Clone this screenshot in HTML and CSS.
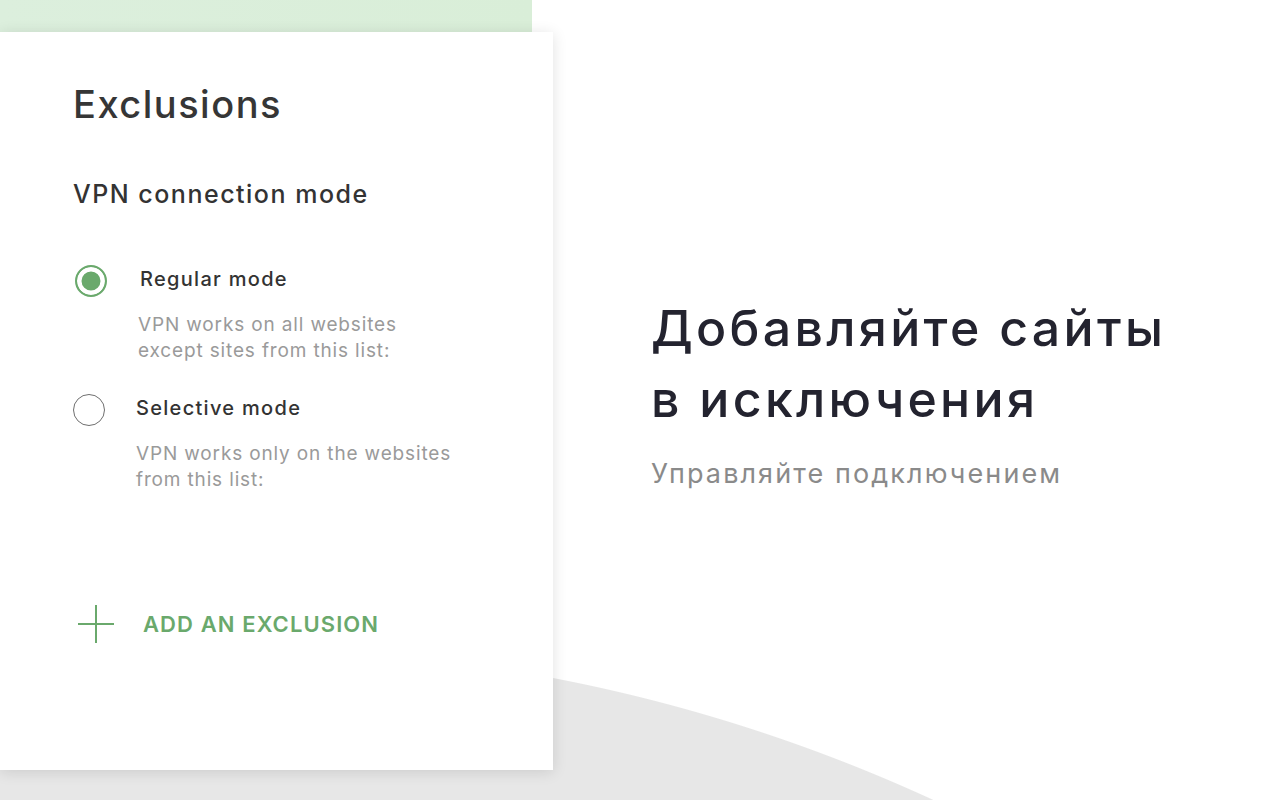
FILE: index.html
```html
<!DOCTYPE html>
<html lang="en">
<head>
<meta charset="utf-8">
<title>Exclusions</title>
<link rel="stylesheet" href="styles.css">
</head>
<body>
<div class="page">
  <div class="left">
    <div class="band"></div>
    <section class="card">
      <h1 class="title">Exclusions</h1>
      <h2 class="subtitle">VPN connection mode</h2>
      <div class="modes">
        <div class="mode mode-regular">
          <span class="radio checked"></span>
          <div class="mode-text">
            <div class="mode-name">Regular mode</div>
            <div class="mode-desc">VPN works on all websites<br>except sites from this list:</div>
          </div>
        </div>
        <div class="mode mode-selective">
          <span class="radio"></span>
          <div class="mode-text">
            <div class="mode-name">Selective mode</div>
            <div class="mode-desc">VPN works only on the websites<br>from this list:</div>
          </div>
        </div>
      </div>
      <div class="add">
        <svg class="plus" width="36" height="38" viewBox="0 0 36 38" aria-hidden="true">
          <line x1="0" y1="19" x2="36" y2="19" stroke="#6aa96c" stroke-width="2"/>
          <line x1="18" y1="0" x2="18" y2="38" stroke="#6aa96c" stroke-width="2"/>
        </svg>
        <span class="add-label">ADD AN EXCLUSION</span>
      </div>
    </section>
  </div>
  <div class="right">
    <h2 class="promo-title">Добавляйте сайты<br>в исключения</h2>
    <p class="promo-sub">Управляйте подключением</p>
  </div>
</div>
</body>
</html>
```
FILE: styles.css
```css
html, body {
  margin: 0;
  padding: 0;
  width: 1280px;
  height: 800px;
  overflow: hidden;
}
body {
  font-family: "Inter", "Liberation Sans", sans-serif;
  background: radial-gradient(circle at 242px 2302px, #e7e7e7 1653px, #ffffff 1654px);
}
.page {
  display: flex;
  align-items: flex-start;
}
.left {
  width: 553px;
  flex: none;
}
.band {
  width: 532px;
  height: 32px;
  background: linear-gradient(90deg, #dcefdd, #d9eed8);
}
.card {
  box-sizing: border-box;
  width: 553px;
  height: 738px;
  background: #fff;
  box-shadow: 0 2px 14px rgba(0, 0, 0, 0.12);
  padding: 50px 0 0 73px;
}
.title {
  margin: 0;
  font-size: 38px;
  line-height: 44px;
  letter-spacing: 1.5px;
  font-weight: 500;
  color: #363636;
}
.subtitle {
  margin: 53px 0 0;
  font-size: 25px;
  line-height: 30px;
  letter-spacing: 1.5px;
  font-weight: 500;
  color: #333;
}
.modes {
  margin-top: 58px;
  display: flex;
  flex-direction: column;
  gap: 32px;
}
.mode {
  display: flex;
  gap: 31px;
}
.radio {
  box-sizing: border-box;
  flex: none;
  width: 32px;
  height: 32px;
  border-radius: 50%;
  border: 1.5px solid #6f6f6f;
  margin-top: -2px;
}
.radio.checked {
  border: 2px solid #6aa96c;
  background: #6aa96c;
  box-shadow: inset 0 0 0 4.5px #fff;
  margin-left: 2px;
}
.mode-name {
  font-size: 20px;
  line-height: 24px;
  letter-spacing: 1.3px;
  font-weight: 500;
  color: #333;
}
.mode-regular .mode-name {
  padding-left: 2px;
}
.mode-desc {
  margin-top: 21px;
  font-size: 19px;
  line-height: 26px;
  letter-spacing: 0.85px;
  color: #9a9a9a;
}
.add {
  margin-top: 112px;
  display: flex;
  align-items: center;
  gap: 29px;
  padding-left: 5px;
}
.plus {
  display: block;
  flex: none;
}
.add-label {
  font-size: 22px;
  line-height: 38px;
  letter-spacing: 1.1px;
  font-weight: 600;
  color: #6aa96c;
}
.right {
  padding: 293px 0 0 98px;
}
.promo-title {
  margin: 0;
  font-size: 50px;
  line-height: 71px;
  letter-spacing: 3.3px;
  font-weight: 500;
  color: #23232f;
}
.promo-sub {
  margin: 23px 0 0;
  font-size: 27px;
  line-height: 32px;
  letter-spacing: 2.1px;
  color: #8a8a8a;
}
```
